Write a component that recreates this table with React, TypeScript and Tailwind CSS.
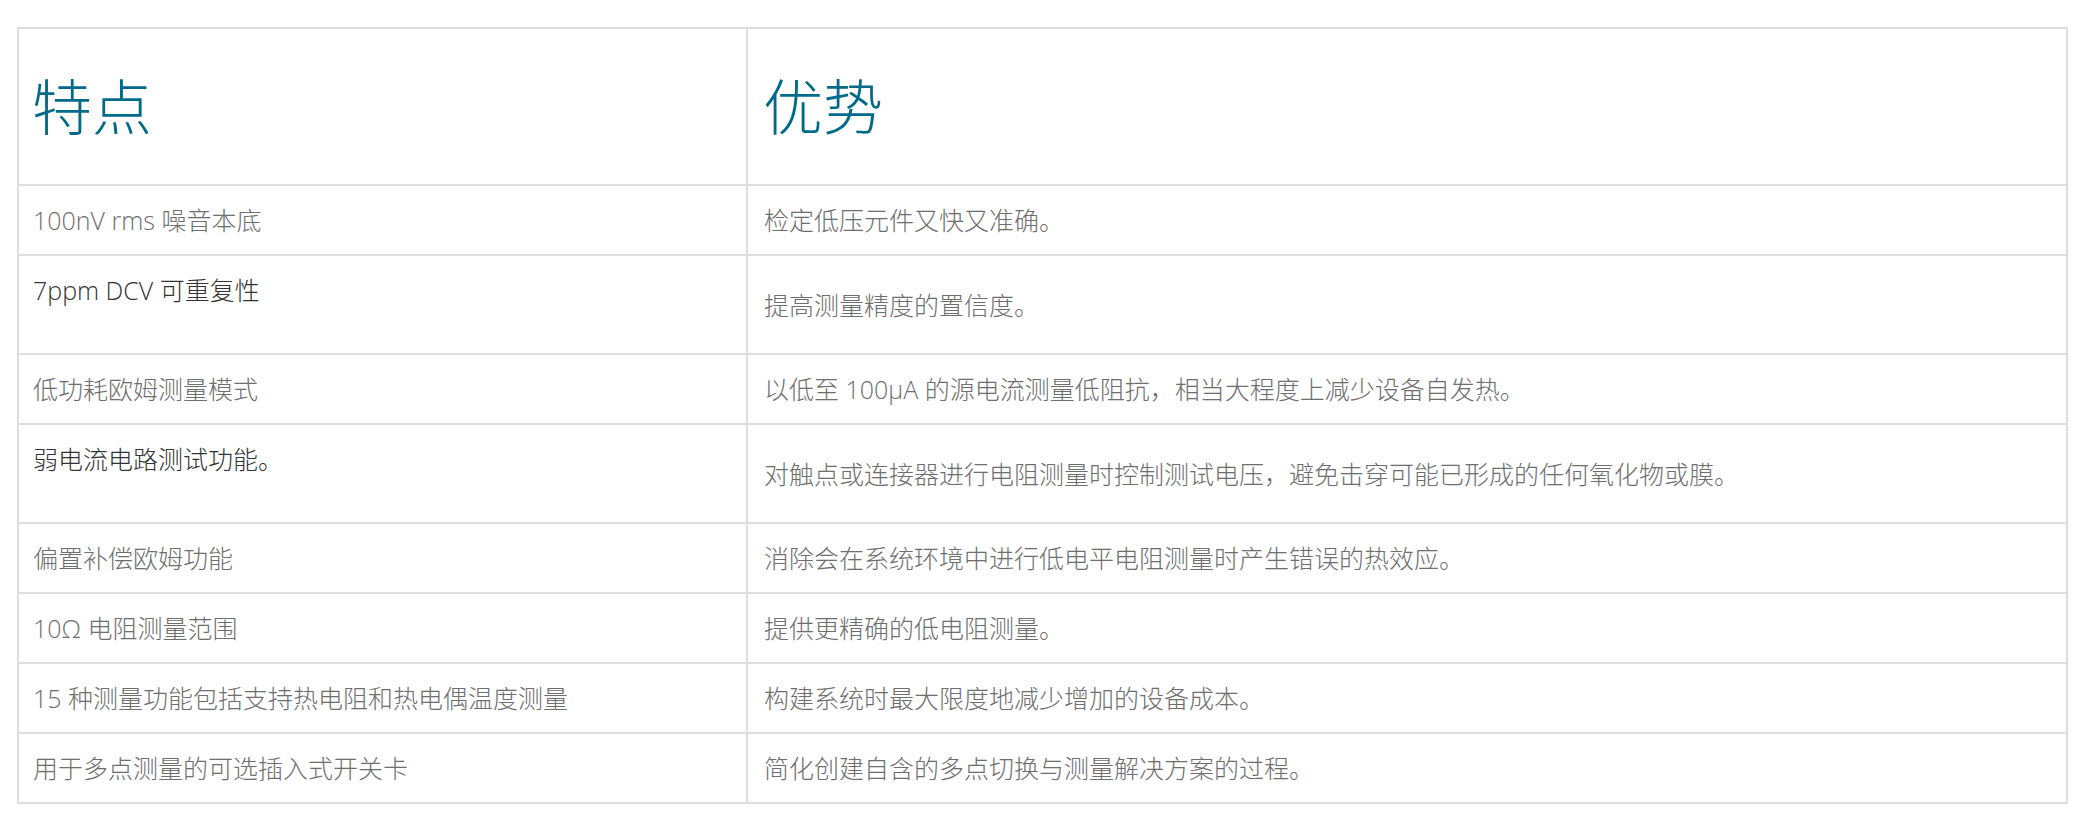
const font = { fontFamily: '"Open Sans", "Noto Sans CJK SC", sans-serif' };

type Row = { feature: string; benefit: string; tall?: boolean };

const rows: Row[] = [
  { feature: '100nV rms 噪音本底', benefit: '检定低压元件又快又准确。' },
  { feature: '7ppm DCV 可重复性', benefit: '提高测量精度的置信度。', tall: true },
  { feature: '低功耗欧姆测量模式', benefit: '以低至 100μA 的源电流测量低阻抗，相当大程度上减少设备自发热。' },
  { feature: '弱电流电路测试功能。', benefit: '对触点或连接器进行电阻测量时控制测试电压，避免击穿可能已形成的任何氧化物或膜。', tall: true },
  { feature: '偏置补偿欧姆功能', benefit: '消除会在系统环境中进行低电平电阻测量时产生错误的热效应。' },
  { feature: '10Ω 电阻测量范围', benefit: '提供更精确的低电阻测量。' },
  { feature: '15 种测量功能包括支持热电阻和热电偶温度测量', benefit: '构建系统时最大限度地减少增加的设备成本。' },
  { feature: '用于多点测量的可选插入式开关卡', benefit: '简化创建自含的多点切换与测量解决方案的过程。' },
];

export default function App() {
  return (
    <div className="min-h-screen bg-white pt-[27px] pl-[17px]" style={font}>
      <div className="w-[2051px] border-2 border-[#dddddd]">
        {/* Header */}
        <div className="flex border-b-2 border-[#dddddd]">
          <div className="flex h-[155px] w-[729px] items-center border-r-2 border-[#dddddd] pl-[13px]">
            <h2 className="text-[60px] font-light leading-none text-[#006a8a]">特点</h2>
          </div>
          <div className="flex flex-1 items-center pl-[15px]">
            <h2 className="text-[60px] font-light leading-none text-[#006a8a]">优势</h2>
          </div>
        </div>

        {rows.map((row, index) => (
          <div
            key={index}
            className={`flex ${index < rows.length - 1 ? 'border-b-2 border-[#dddddd]' : ''}`}
          >
            <div className="w-[729px] border-r-2 border-[#dddddd] py-4 pl-[14px]">
              {row.tall ? (
                <p className="mb-[29px] text-[25px] font-light leading-[36px] text-[#333333]">{row.feature}</p>
              ) : (
                <p className="text-[25px] font-light leading-[36px] text-[#6e6e6e]">{row.feature}</p>
              )}
            </div>
            <div className="flex flex-1 items-center py-4 pl-[16px]">
              <p className="text-[25px] font-light leading-[36px] text-[#6e6e6e]">{row.benefit}</p>
            </div>
          </div>
        ))}
      </div>
    </div>
  );
}
